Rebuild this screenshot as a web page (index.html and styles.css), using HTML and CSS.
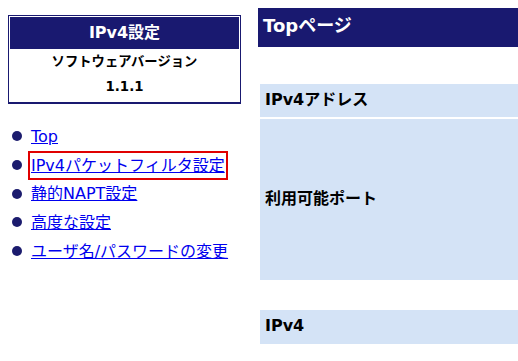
FILE: index.html
```html
<!DOCTYPE html>
<html lang="ja">
<head>
<meta charset="utf-8">
<title>Topページ</title>
<link rel="stylesheet" href="styles.css">
</head>
<body>
<div class="layout">
  <aside class="sidebar">
    <div class="infobox">
      <div class="infobox-head">IPv4設定</div>
      <div class="infobox-row">ソフトウェアバージョン</div>
      <div class="infobox-row">1.1.1</div>
    </div>
    <ul class="nav">
      <li class="nav-item"><span class="dot"></span><a href="#" class="nav-link">Top</a></li>
      <li class="nav-item"><span class="dot"></span><a href="#" class="nav-link is-focused">IPv4パケットフィルタ設定</a></li>
      <li class="nav-item"><span class="dot"></span><a href="#" class="nav-link">静的NAPT設定</a></li>
      <li class="nav-item"><span class="dot"></span><a href="#" class="nav-link">高度な設定</a></li>
      <li class="nav-item"><span class="dot"></span><a href="#" class="nav-link">ユーザ名/パスワードの変更</a></li>
    </ul>
  </aside>
  <main class="main">
    <h1 class="page-title">Topページ</h1>
    <div class="table first">
      <div class="row row-addr"><div class="cell-head">IPv4アドレス</div></div>
      <div class="row row-ports"><div class="cell-head">利用可能ポート</div></div>
    </div>
    <div class="table second">
      <div class="row row-ipv4"><div class="cell-head">IPv4</div></div>
    </div>
  </main>
</div>
</body>
</html>
```

FILE: styles.css
```css
html, body {
  margin: 0;
  padding: 0;
  background: #ffffff;
}
body {
  margin: 8px 0 8px 8px;
  font-family: "DejaVu Sans", "Noto Sans CJK JP", sans-serif;
  color: #000;
  overflow: hidden;
}
.layout {
  display: flex;
  align-items: flex-start;
  gap: 17px;
}
.sidebar {
  width: 233px;
  flex: 0 0 233px;
  margin-top: 7px;
}
.infobox {
  border: 1px solid #191970;
  border-bottom-width: 2px;
  padding: 1px 1px 2px 1px;
  box-sizing: border-box;
  height: 89px;
}
.infobox-head {
  background: #191970;
  color: #fff;
  font-weight: bold;
  font-size: 16px;
  height: 32px;
  line-height: 32px;
  text-align: center;
}
.infobox-row {
  height: 25px;
  line-height: 25px;
  font-size: 13.33px;
  font-weight: bold;
  text-align: center;
}
.nav {
  list-style: none;
  margin: 18px 0 0 0;
  padding: 0;
}
.nav-item {
  display: flex;
  align-items: center;
  height: 28.7px;
  font-size: 16px;
}
.dot {
  width: 10px;
  height: 10px;
  border-radius: 50%;
  background: #1c1c6e;
  margin-left: 4px;
  margin-right: 9px;
  flex: 0 0 10px;
}
.nav-link {
  display: inline-block;
  color: #0000ee;
  text-decoration: underline;
  line-height: 23px;
  font-family: "DejaVu Sans", "Noto Sans CJK JP", sans-serif;
}
.nav-link.is-focused {
  outline: 2px solid #e00000;
  outline-offset: 1px;
}
.main {
  flex: 1;
  min-width: 0;
}
.page-title {
  margin: 0;
  background: #191970;
  color: #fff;
  font-size: 18px;
  font-weight: bold;
  height: 39px;
  line-height: 36px;
  padding-left: 5px;
}
.table {
  margin-left: 2px;
  display: flex;
  flex-direction: column;
  gap: 2px;
}
.table.first {
  margin-top: 37px;
}
.table.second {
  margin-top: 30px;
}
.row {
  background: #d4e3f6;
  display: flex;
  align-items: center;
  padding-left: 5px;
}
.row-addr { height: 33px; }
.row-ports { height: 161px; }
.row-ipv4 { height: 34px; }
.cell-head {
  font-weight: bold;
  font-size: 16px;
  line-height: 1;
  margin-top: -2px;
}
```
